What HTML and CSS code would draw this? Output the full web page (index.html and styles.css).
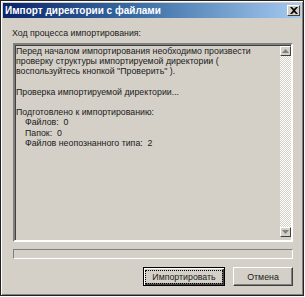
FILE: index.html
```html
<!DOCTYPE html>
<html>
<head>
  <title>Импорт директории с файлами</title>
  <link rel="stylesheet" href="styles.css">
</head>
<body>
  <div class="window">
    <div class="titlebar">
      <span class="title">Импорт директории с файлами</span>
      <div class="close">
        <svg width="8" height="7" viewBox="0 0 8 7">
          <path d="M0 0h2l2 2 2-2h2L5 3.5 8 7H6L4 5 2 7H0l3-3.5z" fill="#000"/>
        </svg>
      </div>
    </div>

    <div class="content">
      <div class="label">Ход процесса импортирования:</div>

      <div class="log">
        <div class="log-text">
          <div>Перед началом импортирования необходимо произвести</div>
          <div>проверку структуры импортируемой директории (</div>
          <div>воспользуйтесь кнопкой "Проверить" ).</div>
          <div class="blank"></div>
          <div>Проверка импортируемой директории...</div>
          <div class="blank"></div>
          <div>Подготовлено к импортированию:</div>
          <div class="indent">Файлов:&nbsp;&nbsp;0</div>
          <div class="indent">Папок:&nbsp;&nbsp;0</div>
          <div class="indent">Файлов неопознанного типа:&nbsp;&nbsp;2</div>
        </div>
        <div class="scrollbar">
          <div class="sb-btn">
            <svg width="7" height="4" viewBox="0 0 7 4"><path d="M3.5 0L7 4H0z" fill="#808080"/></svg>
          </div>
          <div class="sb-track"></div>
          <div class="sb-btn">
            <svg width="7" height="4" viewBox="0 0 7 4"><path d="M0 0h7L3.5 4z" fill="#808080"/></svg>
          </div>
        </div>
      </div>

      <div class="progress"></div>

      <div class="buttons">
        <div class="btn btn-default"><span class="focus">Импортировать</span></div>
        <div class="btn btn-cancel">Отмена</div>
      </div>
    </div>
  </div>
</body>
</html>
```

FILE: styles.css
```css
body {
  margin: 0;
  background: #fff;
  font-family: "Liberation Sans", Arial, sans-serif;
  font-size: 8.8px;
  color: #1a1a1a;
}

.window {
  width: 304px;
  height: 296px;
  box-sizing: border-box;
  border: 1px solid #222;
  padding: 2px;
  background: #d4d0c8;
  box-shadow: inset 1px 1px #fff, inset -1px -1px #808080;
  display: flex;
  flex-direction: column;
}

.titlebar {
  height: 15px;
  background: linear-gradient(to right, #0a246a, #3a6ea5 45%, #a6caf0);
  display: flex;
  align-items: center;
  justify-content: space-between;
  padding-left: 2px;
}

.title {
  color: #fff;
  font-weight: bold;
  font-size: 10px;
}

.close {
  width: 13px;
  height: 11px;
  margin-right: 1px;
  box-sizing: border-box;
  background: #d4d0c8;
  border: 1px solid;
  border-color: #fff #404040 #404040 #fff;
  display: flex;
  align-items: center;
  justify-content: center;
}

.content {
  padding: 10px 8px 0 10px;
  display: flex;
  flex-direction: column;
}

.label {
  line-height: 10px;
  margin-left: -1px;
}

.log {
  margin-top: 5px;
  height: 199px;
  box-sizing: border-box;
  border: 2px solid;
  border-color: #808080 #fff #fff #808080;
  box-shadow: inset 1px 1px #404040;
  display: flex;
}

.log-text {
  flex: 1;
  padding: 1px 0 0 1px;
  line-height: 10.2px;
  white-space: nowrap;
}

.blank {
  height: 10.2px;
}

.indent {
  padding-left: 9px;
}

.scrollbar {
  width: 11px;
  display: flex;
  flex-direction: column;
  padding: 1px 0 3px;
}

.sb-btn {
  height: 10px;
  box-sizing: border-box;
  background: #d4d0c8;
  border: 1px solid;
  border-color: #fff #404040 #404040 #fff;
  display: flex;
  align-items: center;
  justify-content: center;
}

.sb-track {
  flex: 1;
  background-color: #fff;
  background-image: conic-gradient(#d4d0c8 25%, #fff 0 50%, #d4d0c8 0 75%, #fff 0);
  background-size: 2px 2px;
}

.progress {
  margin-top: 7px;
  height: 10px;
  box-sizing: border-box;
  border: 1px solid;
  border-color: #808080 #fff #fff #808080;
}

.buttons {
  margin-top: 8px;
  display: flex;
  justify-content: flex-end;
  gap: 8px;
}

.btn {
  height: 19px;
  box-sizing: border-box;
  background: #d4d0c8;
  border: 1px solid;
  border-color: #fff #404040 #404040 #fff;
  box-shadow: inset -1px -1px #808080;
  display: flex;
  align-items: center;
  justify-content: center;
}

.btn-default {
  width: 82px;
  border: 1px solid #000;
  box-shadow: inset 1px 1px #fff, inset -1px -1px #404040, inset -2px -2px #808080;
}

.focus {
  border: 1px dotted #000;
  padding: 1px 6px;
  line-height: 10px;
}

.btn-cancel {
  width: 60px;
}
```
